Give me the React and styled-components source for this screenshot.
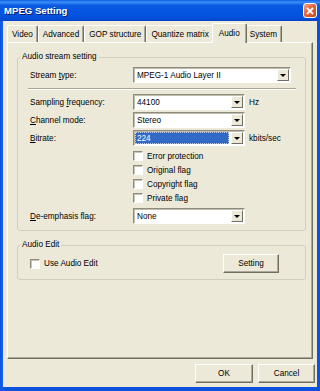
import React from "react";
import styled, { createGlobalStyle } from "styled-components";

const Global = createGlobalStyle`
  html, body {
    margin: 0;
    padding: 0;
    background: #0b53df;
  }
  body {
    font-family: "Liberation Sans", Arial, sans-serif;
  }
`;

const Window = styled.div`
  width: 320px;
  height: 391px;
  display: flex;
  flex-direction: column;
  background: linear-gradient(to right, #0a4fd8, #1660ea 2px, #0b53df 4px);
  overflow: hidden;
`;

const TitleBar = styled.div`
  height: 21px;
  flex-shrink: 0;
  display: flex;
  align-items: center;
  justify-content: space-between;
  padding: 0 3px 0 4px;
  background: linear-gradient(
    to bottom,
    #0a5fe8 0%,
    #3d8ef6 10%,
    #0b5ae4 25%,
    #0454e2 60%,
    #0450da 85%,
    #0344c8 100%
  );
`;

const TitleText = styled.span`
  color: #fff;
  font-weight: bold;
  font-size: 9.6px;
  text-shadow: 1px 1px #0a1e6e;
`;

const CloseButton = styled.div`
  width: 14px;
  height: 15px;
  box-sizing: border-box;
  border: 1px solid #fff;
  border-radius: 3px;
  background: linear-gradient(135deg, #f4a886, #e4643c 45%, #c8481f);
  display: flex;
  align-items: center;
  justify-content: center;
`;

const Body = styled.div`
  flex: 1;
  margin: 0 3px 4px 3px;
  background: #ece9d8;
  display: flex;
  flex-direction: column;
  padding: 2px 4px 4px 4px;
  font-size: 8.2px;
  color: #000;
`;

const TabStrip = styled.div`
  display: flex;
  align-items: flex-end;
  height: 19px;
  flex-shrink: 0;
  position: relative;
  z-index: 1;
`;

const Tab = styled.div`
  height: ${(p) => (p.$active ? 20 : 17)}px;
  box-sizing: border-box;
  padding: 0 ${(p) => (p.$active ? 6 : 4)}px;
  margin: 0 ${(p) => (p.$active ? -2 : 0)}px ${(p) => (p.$active ? -1 : 0)}px;
  display: flex;
  align-items: center;
  background: #ece9d8;
  border-top: 1px solid #fff;
  border-left: 1px solid #fff;
  border-right: 1px solid #716f64;
  border-radius: 2px 2px 0 0;
  box-shadow: inset -1px 0 #aca899;
  position: relative;
  z-index: ${(p) => (p.$active ? 2 : 1)};
`;

const Panel = styled.div`
  flex: 1;
  display: flex;
  flex-direction: column;
  border: 1px solid;
  border-color: #fff #716f64 #716f64 #fff;
  box-shadow: inset -1px -1px #aca899;
`;

const Group = styled.fieldset`
  margin: 8px 6px 0 9px;
  padding: ${(p) => p.$pad};
  border: 1px solid #d0cebf;
  border-radius: 3px;
  min-width: 0;
`;

const Legend = styled.legend`
  margin-left: -10px;
  padding: 0 2px;
  line-height: 12px;
  font-size: 8.2px;
`;

const Row = styled.div`
  display: flex;
  align-items: center;
  height: 16px;
  margin-top: ${(p) => p.$gap || 0}px;
`;

const FieldLabel = styled.span`
  width: 103px;
  flex-shrink: 0;
`;

const Select = styled.div`
  width: ${(p) => p.$w}px;
  height: 16px;
  box-sizing: border-box;
  display: flex;
  padding: 1px;
  background: #fff;
  border: 1px solid;
  border-color: #8e8b7c #fff #fff #8e8b7c;
  box-shadow: inset 1px 1px #c0bdac;
`;

const SelectValue = styled.div`
  flex: 1;
  display: flex;
  align-items: center;
  padding-left: 2px;
  margin-right: 2px;
  background: ${(p) => (p.$selected ? "#316ac5" : "transparent")};
  color: ${(p) => (p.$selected ? "#fff" : "#000")};
  outline: ${(p) => (p.$selected ? "1px dotted #c0d0f0" : "none")};
  outline-offset: -1px;
`;

const DropButton = styled.div`
  width: 12px;
  box-sizing: border-box;
  background: #ece9d8;
  border: 1px solid;
  border-color: #fff #716f64 #716f64 #fff;
  display: flex;
  align-items: center;
  justify-content: center;
`;

const Arrow = styled.span`
  width: 0;
  height: 0;
  border-left: 3px solid transparent;
  border-right: 3px solid transparent;
  border-top: 3px solid #000;
`;

const Unit = styled.span`
  margin-left: 4px;
`;

const Separator = styled.div`
  border-top: 1px solid #a8a595;
  border-bottom: 1px solid #fff;
  margin: 5px -2px 4px -2px;
`;

const CheckList = styled.div`
  display: flex;
  flex-direction: column;
  margin: 3px 0 0 103px;
`;

const CheckRow = styled.label`
  display: flex;
  align-items: center;
  height: 14px;
  gap: 4px;
`;

const CheckBox = styled.span`
  width: 10px;
  height: 10px;
  box-sizing: border-box;
  background: #fff;
  border: 1px solid;
  border-color: #8e8b7c #fff #fff #8e8b7c;
  box-shadow: inset 1px 1px #c8c5b4;
`;

const EditRow = styled.div`
  display: flex;
  align-items: center;
  justify-content: space-between;
  height: 19px;
  padding-right: 15px;
`;

const Button = styled.div`
  width: ${(p) => p.$w}px;
  height: 19px;
  box-sizing: border-box;
  display: flex;
  align-items: center;
  justify-content: center;
  background: #ece9d8;
  border: 1px solid;
  border-color: #fff #716f64 #716f64 #fff;
  box-shadow: inset -1px -1px #aca899;
`;

const Footer = styled.div`
  display: flex;
  justify-content: flex-end;
  gap: 5px;
  margin: 5px -2px 0 0;
  flex-shrink: 0;
`;

const tabs = ["Video", "Advanced", "GOP structure", "Quantize matrix", "Audio", "System"];
const flags = ["Error protection", "Original flag", "Copyright flag", "Private flag"];

const Combo = ({ w, value, selected }) => (
  <Select $w={w}>
    <SelectValue $selected={selected}>{value}</SelectValue>
    <DropButton>
      <Arrow />
    </DropButton>
  </Select>
);

export default function App() {
  return (
    <Window>
      <Global />
      <TitleBar>
        <TitleText>MPEG Setting</TitleText>
        <CloseButton>
          <svg width="8" height="8" viewBox="0 0 8 8">
            <path d="M1 1L7 7M7 1L1 7" stroke="#fff" strokeWidth="1.8" />
          </svg>
        </CloseButton>
      </TitleBar>
      <Body>
        <TabStrip>
          {tabs.map((t) => (
            <Tab key={t} $active={t === "Audio"}>
              {t}
            </Tab>
          ))}
        </TabStrip>
        <Panel>
          <Group $pad="4px 11px 6px 12px">
            <Legend>Audio stream setting</Legend>
            <Row>
              <FieldLabel>
                Stream <u>t</u>ype:
              </FieldLabel>
              <Combo w={158} value="MPEG-1 Audio Layer II" />
            </Row>
            <Separator />
            <Row>
              <FieldLabel>
                Sampling <u>f</u>requency:
              </FieldLabel>
              <Combo w={112} value="44100" />
              <Unit>Hz</Unit>
            </Row>
            <Row $gap={2}>
              <FieldLabel>
                <u>C</u>hannel mode:
              </FieldLabel>
              <Combo w={112} value="Stereo" />
            </Row>
            <Row $gap={2}>
              <FieldLabel>
                <u>B</u>itrate:
              </FieldLabel>
              <Combo w={112} value="224" selected />
              <Unit>kbits/sec</Unit>
            </Row>
            <CheckList>
              {flags.map((f) => (
                <CheckRow key={f}>
                  <CheckBox />
                  {f}
                </CheckRow>
              ))}
            </CheckList>
            <Row $gap={3}>
              <FieldLabel>
                <u>D</u>e-emphasis flag:
              </FieldLabel>
              <Combo w={112} value="None" />
            </Row>
          </Group>
          <Group $pad="3px 11px 6px 12px">
            <Legend>Audio Edit</Legend>
            <EditRow>
              <CheckRow>
                <CheckBox />
                Use Audio Edit
              </CheckRow>
              <Button $w={56}>Setting</Button>
            </EditRow>
          </Group>
        </Panel>
        <Footer>
          <Button $w={58}>OK</Button>
          <Button $w={57}>Cancel</Button>
        </Footer>
      </Body>
    </Window>
  );
}
